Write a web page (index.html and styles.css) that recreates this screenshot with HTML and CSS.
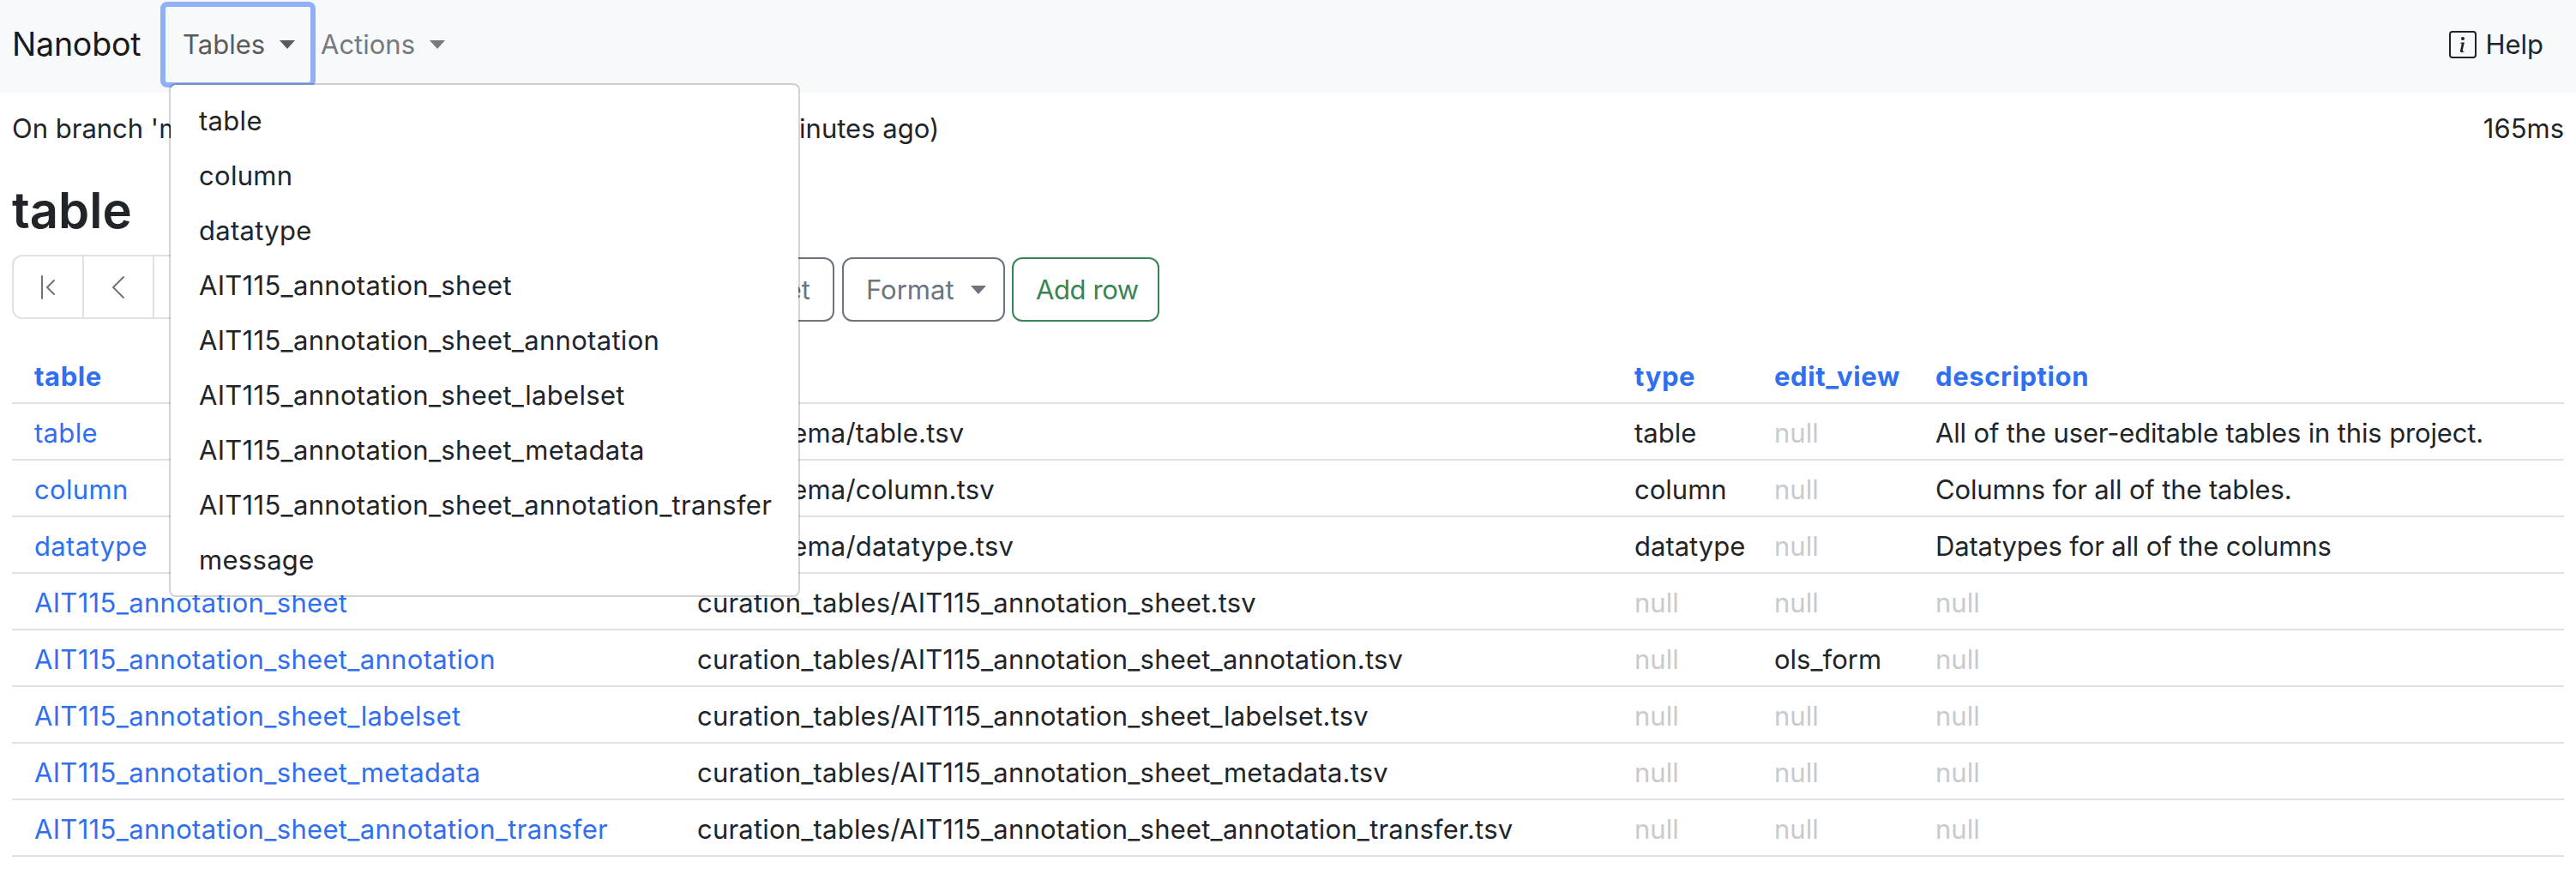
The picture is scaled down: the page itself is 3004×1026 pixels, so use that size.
FILE: index.html
```html
<!DOCTYPE html>
<html lang="en">
<head>
<meta charset="utf-8">
<title>table</title>
<link rel="stylesheet" href="styles.css">
</head>
<body>
<nav class="navbar">
  <a class="brand">Nanobot</a>
  <div class="nav-menu">
    <a class="nav-link focus">Tables<span class="caret"></span></a>
    <ul class="dropdown">
      <li>table</li>
      <li>column</li>
      <li>datatype</li>
      <li>AIT115_annotation_sheet</li>
      <li>AIT115_annotation_sheet_annotation</li>
      <li>AIT115_annotation_sheet_labelset</li>
      <li>AIT115_annotation_sheet_metadata</li>
      <li>AIT115_annotation_sheet_annotation_transfer</li>
      <li>message</li>
    </ul>
  </div>
  <a class="nav-link muted">Actions<span class="caret"></span></a>
  <a class="help">
    <svg class="info" viewBox="0 0 16 16" aria-hidden="true"><path fill="currentColor" d="M14 1a1 1 0 0 1 1 1v12a1 1 0 0 1-1 1H2a1 1 0 0 1-1-1V2a1 1 0 0 1 1-1h12zM2 0a2 2 0 0 0-2 2v12a2 2 0 0 0 2 2h12a2 2 0 0 0 2-2V2a2 2 0 0 0-2-2H2z"/><path fill="currentColor" d="m8.93 6.588-2.29.287-.082.38.45.083c.294.07.352.176.288.469l-.738 3.468c-.194.897.105 1.319.808 1.319.545 0 1.178-.252 1.465-.598l.088-.416c-.2.176-.492.246-.686.246-.275 0-.375-.193-.304-.533L8.93 6.588zM9 4.5a1 1 0 1 1-2 0 1 1 0 0 1 2 0z"/></svg>
    Help
  </a>
</nav>
<main class="content">
  <div class="status">
    <span>On branch 'main' with 32 uncommitted changes (updated 12 minutes ago)</span>
    <span>165ms</span>
  </div>
  <h1 class="title">table</h1>
  <div class="toolbar">
    <div class="pager">
      <a class="page">
        <svg class="chev" viewBox="0 0 16 16" aria-hidden="true"><path fill="currentColor" fill-rule="evenodd" d="M11.854 3.646a.5.5 0 0 1 0 .708L8.207 8l3.647 3.646a.5.5 0 0 1-.708.708l-4-4a.5.5 0 0 1 0-.708l4-4a.5.5 0 0 1 .708 0zM4.5 1a.5.5 0 0 0-.5.5v13a.5.5 0 0 0 1 0v-13a.5.5 0 0 0-.5-.5z"/></svg>
      </a>
      <a class="page">
        <svg class="chev" viewBox="0 0 16 16" aria-hidden="true"><path fill="currentColor" fill-rule="evenodd" d="M11.354 1.646a.5.5 0 0 1 0 .708L5.707 8l5.647 5.646a.5.5 0 0 1-.708.708l-6-6a.5.5 0 0 1 0-.708l6-6a.5.5 0 0 1 .708 0z"/></svg>
      </a>
      <a class="page page-last"></a>
    </div>
    <a class="btn btn-grey btn-reset">Reset</a>
    <a class="btn btn-grey btn-format">Format<span class="caret"></span></a>
    <a class="btn btn-green">Add row</a>
  </div>
  <table class="grid">
    <thead>
      <tr>
        <th class="col-a">table</th>
        <th class="col-b">path</th>
        <th class="col-c">type</th>
        <th class="col-d">edit_view</th>
        <th>description</th>
      </tr>
    </thead>
    <tbody>
      <tr><td><a>table</a></td><td class="file">src/schema/table.tsv</td><td>table</td><td class="null">null</td><td class="prose">All of the user-editable tables in this project.</td></tr>
      <tr><td><a>column</a></td><td class="file">src/schema/column.tsv</td><td>column</td><td class="null">null</td><td class="prose">Columns for all of the tables.</td></tr>
      <tr><td><a>datatype</a></td><td class="file">src/schema/datatype.tsv</td><td>datatype</td><td class="null">null</td><td class="prose">Datatypes for all of the columns</td></tr>
      <tr><td><a>AIT115_annotation_sheet</a></td><td class="file">curation_tables/AIT115_annotation_sheet.tsv</td><td class="null">null</td><td class="null">null</td><td class="null">null</td></tr>
      <tr><td><a>AIT115_annotation_sheet_annotation</a></td><td class="file">curation_tables/AIT115_annotation_sheet_annotation.tsv</td><td class="null">null</td><td>ols_form</td><td class="null">null</td></tr>
      <tr><td><a>AIT115_annotation_sheet_labelset</a></td><td class="file">curation_tables/AIT115_annotation_sheet_labelset.tsv</td><td class="null">null</td><td class="null">null</td><td class="null">null</td></tr>
      <tr><td><a>AIT115_annotation_sheet_metadata</a></td><td class="file">curation_tables/AIT115_annotation_sheet_metadata.tsv</td><td class="null">null</td><td class="null">null</td><td class="null">null</td></tr>
      <tr><td><a>AIT115_annotation_sheet_annotation_transfer</a></td><td class="file">curation_tables/AIT115_annotation_sheet_annotation_transfer.tsv</td><td class="null">null</td><td class="null">null</td><td class="null">null</td></tr>
    </tbody>
  </table>
</main>
</body>
</html>
```
FILE: styles.css
```css
* { box-sizing: border-box; }
html, body { margin: 0; padding: 0; }
body {
  font-family: Inter, "Liberation Sans", sans-serif;
  font-size: 31px;
  line-height: 48px;
  color: #212529;
  background: #fff;
  overflow: hidden;
}
ul { list-style: none; margin: 0; padding: 0; }

.navbar {
  display: flex;
  align-items: flex-start;
  height: 108px;
  padding: 0 14px;
  background: #f8f9fa;
}
.brand { flex: none; width: 173px; font-size: 37.5px; color: #1a1a1a; margin-top: 28px; letter-spacing: -.2px; }
.nav-menu { position: relative; flex: none; margin-top: 2px; }
.nav-link {
  display: block;
  padding: 16px 0;
  height: 82px;
  white-space: nowrap;
  color: #595c5f;
}
.nav-link.muted { color: #77797c; padding-left: 6px; margin-top: 12px; }
.focus {
  border-radius: 8px;
  box-shadow: 0 0 0 6px #8fb0f4 inset;
  height: 100px;
  padding: 26px 0 0 26px;
  width: 181px;
}
.caret {
  display: inline-block;
  width: 0;
  height: 0;
  margin-left: 17px;
  vertical-align: 6px;
  border-top: 10px solid currentColor;
  border-left: 9.5px solid transparent;
  border-right: 9.5px solid transparent;
}
.dropdown {
  position: absolute;
  left: 10px;
  top: 95px;
  width: 736px;
  padding: 10px 0 9px;
  background: #fff;
  background-clip: padding-box;
  border: 2px solid rgba(0, 0, 0, .17);
  border-radius: 8px;
  letter-spacing: .3px;
  z-index: 10;
}
.dropdown li { height: 64px; padding: 8px 0 8px 33px; white-space: nowrap; }
.help { margin-left: auto; margin-top: 28px; margin-right: 24px; display: flex; align-items: center; gap: 10px; }
.info { width: 32px; height: 32px; }

.content { padding: 0 14px; }
.status { display: flex; justify-content: space-between; height: 84px; align-items: center; }
.title { margin: 0; font-size: 58px; line-height: 72px; font-weight: 600; padding-top: 17px; height: 105px; }
.toolbar { display: flex; align-items: flex-start; height: 76px; }
.pager { display: flex; flex: none; height: 75px; border: 2px solid #dee2e6; border-radius: 12px; width: 720px; }
.page { display: flex; align-items: center; justify-content: center; width: 82px; border-right: 2px solid #dee2e6; color: #6c757d; }
.page-last { border-right: none; flex: 1; }
.chev { width: 32px; height: 32px; }
.btn {
  display: block;
  height: 75px;
  margin-top: 3px;
  padding: 12px 26px;
  border: 2px solid;
  border-radius: 12px;
  margin-left: 9px;
  white-space: nowrap;
}
.btn-reset { width: 239px; margin-left: 0; text-align: right; }
.btn-format { width: 190px; }
.btn-format .caret { margin-left: 19px; }
.btn-grey { color: #6c757d; border-color: #6c757d; }
.btn-green { color: #388457; border-color: #388457; width: 172px; margin-left: 8px; letter-spacing: -.4px; }

.grid { border-collapse: collapse; table-layout: fixed; width: 2976px; margin-top: 31px; }
.grid th, .grid td { text-align: left; padding: 10px 16px 6px 26px; height: 66px; border-bottom: 2px solid #dee2e6; white-space: nowrap; }
.grid th { color: #2f6ff0; font-weight: 700; letter-spacing: .6px; }
.grid a { color: #2f6ff0; letter-spacing: .32px; }
.file { letter-spacing: .2px; }
.prose { letter-spacing: -.15px; }
.col-a { width: 773px; }
.col-b { width: 1093px; }
.col-c { width: 163px; }
.col-d { width: 188px; }
.null { color: #c8cacc; }
```
